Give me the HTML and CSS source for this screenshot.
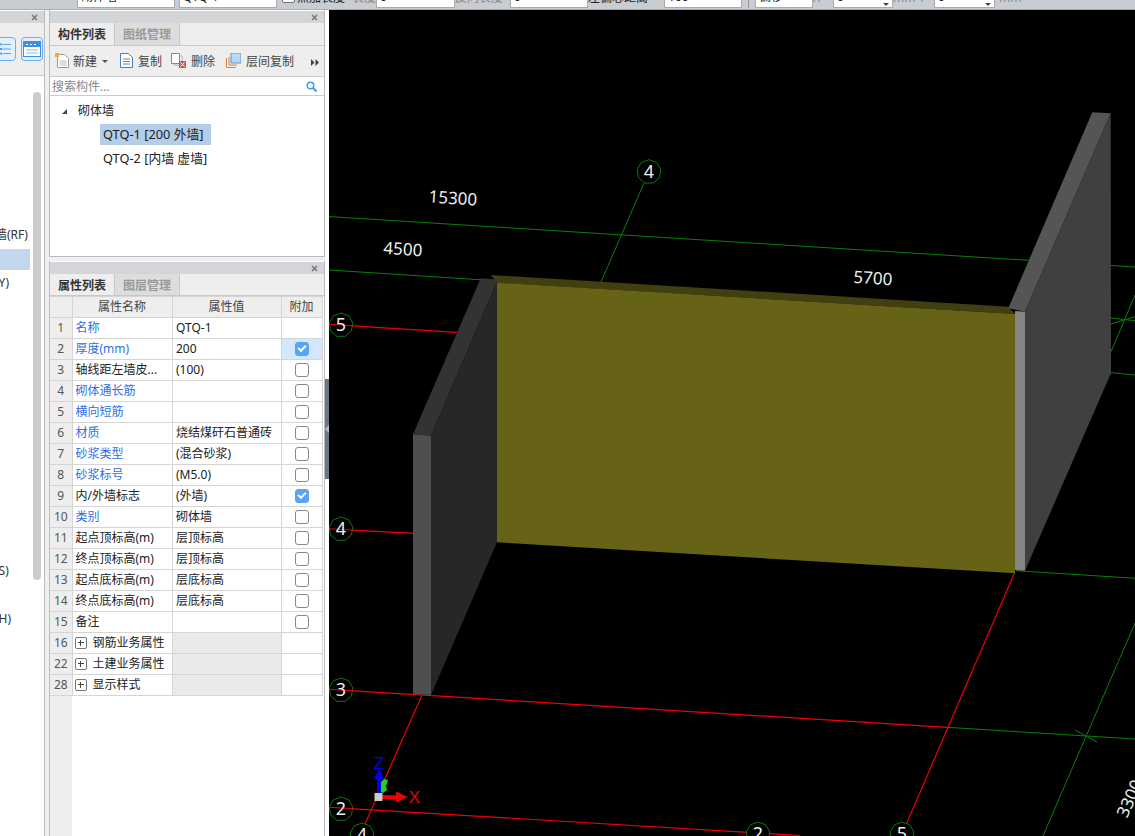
FILE: index.html
```html
<!DOCTYPE html>
<html lang="zh-CN">

<head>
  <meta charset="UTF-8">
  <title>构件列表</title>
  <link rel="stylesheet" href="styles.css">
</head>

<body>
  <div class="topbar">
    <span class="tb-box w-98 ml-77">砌体墙</span>
    <span class="tb-box w-98 ml-4">QTQ-1</span>
    <span class="tb-check"></span>
    <span class="tb-text ml-2">点加长度</span>
    <span class="tb-text grey ml-7">长度</span>
    <span class="tb-box w-79">0</span>
    <span class="tb-text grey w-55">反向长度</span>
    <span class="tb-box w-78">0</span>
    <span class="tb-text w-76">左偏心距离</span>
    <span class="tb-box w-78">100</span>
    <span class="tb-sep"></span>
    <span class="tb-box w-58">偏移</span>
    <span class="tb-text grey w-20">X</span>
    <span class="tb-box w-60 tb-spin">0</span>
    <span class="tb-text grey w-41">mm Y</span>
    <span class="tb-box w-61 tb-spin">0</span>
    <span class="tb-text grey ml-4">mm</span>
  </div>

  <div class="main">
    <div class="side">
      <div class="panel-head"><svg class="close" viewBox="0 0 7 7"><path d="M1 1l5 5M6 1l-5 5"/></svg></div>
      <div class="side-tools">
        <span class="side-btn cut">
          <svg width="22" height="22" viewBox="0 0 22 22"><path d="M5 6h3M5 11h3M5 16h3" fill="none" stroke="#4a98e8" stroke-width="2"/><path d="M9 6h8.500M9 11h8.500M9 16h8.500" fill="none" stroke="#4a98e8"/></svg>
        </span>
        <span class="side-btn">
          <svg width="18" height="16" viewBox="0 0 18 16"><rect x=".5" y=".5" width="17" height="15" fill="#fff" stroke="#3d8fe0"/><rect x="1" y="1" width="16" height="5" fill="#3d8fe0"/><path d="M3 3.500h2M7 3.500h2M11 3.500h2" stroke="#fff"/><path d="M3 9h12M3 12h12" stroke="#8bb9e6"/></svg>
        </span>
      </div>
      <ul class="side-list">
        <li class="first">人防门框墙(RF)</li>
        <li class="on"></li>
        <li>砌体加筋(Y)</li>
        <li class="far">砌体过梁(S)</li>
        <li class="next">栏板压顶(H)</li>
      </ul>
      <div class="side-scroll"></div>
    </div>

    <div class="panels">
      <section class="panel panel-top">
        <div class="panel-head"><svg class="close" viewBox="0 0 7 7"><path d="M1 1l5 5M6 1l-5 5"/></svg></div>
        <div class="tabs">
          <span class="tab on">构件列表</span>
          <span class="tab">图纸管理</span>
        </div>
        <div class="tools">
          <span class="tool tool-new">
            <svg width="14" height="15" viewBox="0 0 14 15"><path d="M2.500 1.500h7l4 4v9h-11z" fill="#fff" stroke="#999"/><path d="M4.500 8h7M4.500 10h7M4.500 12h7" stroke="#bbb"/><rect x="0" y="0" width="4" height="4" fill="#f3a63a"/></svg>
            新建<i class="caret"></i>
          </span>
          <span class="tool tool-copy">
            <svg width="13" height="15" viewBox="0 0 13 15"><path d="M.5 .5h8l4 4v10H.5z" fill="#fff" stroke="#4c7fb5"/><path d="M3 6h7M3 8.500h7M3 11h7" stroke="#4c8fd0"/></svg>
            复制
          </span>
          <span class="tool">
            <svg width="15" height="15" viewBox="0 0 15 15"><path d="M3 3h8v9H3z" fill="#fff" stroke="#aaa"/><path d="M.5 .5h8v10H.500z" fill="#fff" stroke="#888"/><rect x="8" y="8" width="7" height="7" fill="#d9534f"/><path d="M9.500 9.500l4 4M13.500 9.500l-4 4" stroke="#fff"/></svg>
            删除
          </span>
          <span class="tool">
            <svg width="15" height="15" viewBox="0 0 15 15"><path d="M.5 5v9.500H10M3 4v8h8" fill="none" stroke="#e0853d"/><rect x="5" y="0" width="10" height="10" fill="#bcd6f5" stroke="#5b93d6"/></svg>
            层间复制
          </span>
          <svg class="more" width="8" height="7" viewBox="0 0 8 7"><path d="M0 0l3.500 3.500L0 7zM4.500 0L8 3.500 4.500 7z" fill="#444"/></svg>
        </div>
        <div class="search">
          <span>搜索构件...</span>
          <svg width="11" height="11" viewBox="0 0 11 11"><circle cx="4.500" cy="4.500" r="3.300" fill="none" stroke="#4a9bdc" stroke-width="1.500"/><path d="M7 7l3.500 3.500" stroke="#4a9bdc" stroke-width="2"/></svg>
        </div>
        <div class="tree">
          <div class="tree-root"><i class="tree-arrow"></i>砌体墙</div>
          <div class="tree-item on">QTQ-1 [200 外墙]</div>
          <div class="tree-item">QTQ-2 [内墙 虚墙]</div>
        </div>
      </section>

      <section class="panel panel-bottom">
        <div class="panel-head"><svg class="close" viewBox="0 0 7 7"><path d="M1 1l5 5M6 1l-5 5"/></svg></div>
        <div class="tabs">
          <span class="tab on">属性列表</span>
          <span class="tab">图层管理</span>
        </div>
        <div class="props">
          <table>
            <colgroup>
              <col class="c-no"><col class="c-name"><col class="c-val"><col class="c-add">
            </colgroup>
            <thead>
              <tr><th></th><th>属性名称</th><th>属性值</th><th>附加</th></tr>
            </thead>
            <tbody>
              <tr><td class="no">1</td><td class="blue">名称</td><td>QTQ-1</td><td></td></tr>
              <tr><td class="no">2</td><td class="blue">厚度(mm)</td><td>200</td><td class="add hl"><span class="box checked"></span></td></tr>
              <tr><td class="no">3</td><td>轴线距左墙皮...</td><td>(100)</td><td class="add"><span class="box"></span></td></tr>
              <tr><td class="no">4</td><td class="blue">砌体通长筋</td><td></td><td class="add"><span class="box"></span></td></tr>
              <tr><td class="no">5</td><td class="blue">横向短筋</td><td></td><td class="add"><span class="box"></span></td></tr>
              <tr><td class="no">6</td><td class="blue">材质</td><td>烧结煤矸石普通砖</td><td class="add"><span class="box"></span></td></tr>
              <tr><td class="no">7</td><td class="blue">砂浆类型</td><td>(混合砂浆)</td><td class="add"><span class="box"></span></td></tr>
              <tr><td class="no">8</td><td class="blue">砂浆标号</td><td>(M5.0)</td><td class="add"><span class="box"></span></td></tr>
              <tr><td class="no">9</td><td>内/外墙标志</td><td>(外墙)</td><td class="add"><span class="box checked"></span></td></tr>
              <tr><td class="no">10</td><td class="blue">类别</td><td>砌体墙</td><td class="add"><span class="box"></span></td></tr>
              <tr><td class="no">11</td><td>起点顶标高(m)</td><td>层顶标高</td><td class="add"><span class="box"></span></td></tr>
              <tr><td class="no">12</td><td>终点顶标高(m)</td><td>层顶标高</td><td class="add"><span class="box"></span></td></tr>
              <tr><td class="no">13</td><td>起点底标高(m)</td><td>层底标高</td><td class="add"><span class="box"></span></td></tr>
              <tr><td class="no">14</td><td>终点底标高(m)</td><td>层底标高</td><td class="add"><span class="box"></span></td></tr>
              <tr><td class="no">15</td><td>备注</td><td></td><td class="add"><span class="box"></span></td></tr>
              <tr class="group"><td class="no">16</td><td><i class="plus"></i>钢筋业务属性</td><td class="shade"></td><td></td></tr>
              <tr class="group"><td class="no">22</td><td><i class="plus"></i>土建业务属性</td><td class="shade"></td><td></td></tr>
              <tr class="group"><td class="no">28</td><td><i class="plus"></i>显示样式</td><td class="shade"></td><td></td></tr>
            </tbody>
          </table>
        </div>
      </section>
    </div>

    <div class="splitter"><div class="split-handle"><i></i></div></div>

    <div class="view">
      <svg class="scene" viewBox="329 10 806 826" width="806" height="826">
        <defs>
          <polygon id="bubble" points="0,-12 7.700,-9.200 11.800,-2.100 10.400,6 4.100,11.300 -4.100,11.300 -10.400,6 -11.800,-2.100 -7.700,-9.200" fill="#000" stroke="#0a7a0a"/>
        </defs>

        <g fill="none" stroke="#0a7f0a">
          <path d="M329 216.600L1135 267"/>
          <path d="M329 270L500 281"/>
          <path d="M644 183L601 282"/>
          <path d="M1016 570.700L1135 578.300"/>
          <path d="M947 727.300L1135 739"/>
          <path d="M1075 730L1097 742"/>
          <path d="M1043 836L1135 623"/>
          <path d="M1111 318L1135 320.700M1111 324L1135 316.700M1111 351.700L1135 295M1111 372.700L1135 375"/>
        </g>
        <g fill="none" stroke="#f00000" stroke-width="1.200">
          <path d="M329 324.300L460 332.600"/>
          <path d="M329 528.800L414 533.400"/>
          <path d="M329 689.300L947.300 727.300"/>
          <path d="M329 807.300L800 835.500"/>
          <path d="M1015 571.700L906 825"/>
          <path d="M422 695L365 824"/>
        </g>

        <polygon points="413,434.300 431,435.700 498,279.500 480.700,278.300" fill="#333"/>
        <polygon points="431,435.700 497,282 497,542.300 431,695" fill="#272727"/>
        <polygon points="413,434.300 431,435.700 431,695 413,694" fill="#4f4f4f"/>

        <polygon points="491,275 1008.300,306.700 1015,314 496.700,282.700" fill="#413e10"/>
        <polygon points="497,282.700 1015,314 1015,573.300 497,542.300" fill="#676316"/>

        <polygon points="1092.300,112.300 1110.700,113.300 1025,311.700 1008.300,308.300" fill="#555"/>
        <polygon points="1110.700,113.300 1111,373 1025,570.700 1025,311.700" fill="#404040"/>
        <polygon points="1015,311 1025,311.700 1025,570.700 1015,570" fill="#858585"/>

        <use href="#bubble" x="649" y="171.700"/>
        <use href="#bubble" x="341" y="325"/>
        <use href="#bubble" x="341" y="529"/>
        <use href="#bubble" x="341" y="690"/>
        <use href="#bubble" x="341" y="809"/>
        <use href="#bubble" x="362" y="835"/>
        <use href="#bubble" x="758" y="834"/>
        <use href="#bubble" x="902" y="834"/>

        <path d="M329 324.300L353 325.800M329 528.800L353 530.100M329 689.300L353 690.800M329 807.300L353 808.700" stroke="#f00000" fill="none"/>

        <g class="axis-no">
          <text x="649" y="178">4</text>
          <text x="341" y="331">5</text>
          <text x="341" y="535">4</text>
          <text x="341" y="696">3</text>
          <text x="341" y="815">2</text>
          <text x="362" y="841">4</text>
          <text x="758" y="840">2</text>
          <text x="902" y="840">5</text>
        </g>
        <g class="dim">
          <text transform="translate(452.500 204) rotate(4)">15300</text>
          <text transform="translate(402.500 255) rotate(4)">4500</text>
          <text transform="translate(872.500 284) rotate(4)">5700</text>
          <text transform="translate(1135 801) rotate(-66)">3300</text>
        </g>

        <polygon points="384,779 388,780 386,786 387,790 383,793 380,792 380,783" fill="#1fd21f"/>
        <path d="M379 793V778" stroke="#0000f0" stroke-width="4"/>
        <polygon points="379,768.500 384,779 374,779" fill="#0000f0"/>
        <path d="M382 797L397 797.500" stroke="#f00000" stroke-width="4"/>
        <polygon points="408,797 396,791.500 396,802.500" fill="#f00000"/>
        <rect x="374.500" y="793" width="8" height="8" fill="#ccc"/>
        <text class="gizmo" x="379" y="769" fill="#0000f0">Z</text>
        <text class="gizmo" x="414.500" y="803" fill="#f00000">X</text>
      </svg>
    </div>
  </div>
</body>

</html>
```

FILE: styles.css
```css
html,
body {
  height: 100%;
}

body {
  margin: 0;
  height: 836px;
  overflow: hidden;
  background: #f0f0f0;
  color: #222;
  font: 12px/1.2 "Noto Sans", "Noto Sans CJK SC", sans-serif;
}

ul {
  margin: 0;
  padding: 0;
  list-style: none;
}

i {
  font-style: normal;
}

/* top toolbar, only its lower edge is in the picture */
.topbar {
  box-sizing: border-box;
  display: flex;
  align-items: flex-end;
  height: 10px;
  padding-bottom: 1px;
  overflow: hidden;
  background: #c9ccd0;
  border-bottom: 1px solid #a9acb0;
}

.tb-box {
  box-sizing: border-box;
  flex: none;
  height: 22px;
  padding-left: 3px;
  border: 1px solid #aaa;
  background: #fff;
  line-height: 20px;
}

.tb-spin {
  position: relative;
}

.tb-spin::after {
  content: "";
  position: absolute;
  right: 3px;
  bottom: 1px;
  border: 3px solid transparent;
  border-top-color: #444;
  border-bottom: 0;
}

.tb-text {
  flex: none;
  height: 20px;
  line-height: 20px;
  white-space: nowrap;
  overflow: hidden;
}

.tb-text.grey {
  color: #888;
}

.tb-check {
  flex: none;
  box-sizing: border-box;
  width: 13px;
  height: 13px;
  margin: 0 0 5px 5px;
  border: 1px solid #777;
  border-radius: 2px;
  background: #fff;
}

.tb-sep {
  flex: none;
  width: 1px;
  height: 20px;
  margin: 0 6px;
  background: #999;
}

.ml-77 { margin-left: 77px; }
.ml-7 { margin-left: 7px; }
.ml-4 { margin-left: 4px; }
.ml-2 { margin-left: 2px; }
.w-98 { width: 98px; }
.w-79 { width: 79px; }
.w-78 { width: 78px; }
.w-76 { width: 76px; }
.w-61 { width: 61px; }
.w-60 { width: 60px; }
.w-58 { width: 58px; }
.w-55 { width: 55px; }
.w-41 { width: 41px; }
.w-20 { width: 20px; }

.main {
  display: flex;
  height: 826px;
}

/* far left panel */
.side {
  position: relative;
  flex: none;
  box-sizing: border-box;
  width: 45px;
  border-right: 1px solid #bbb;
  background: #fff;
  overflow: hidden;
}

.panel-head {
  display: flex;
  justify-content: flex-end;
  align-items: center;
  height: 12px;
  padding-right: 6px;
  margin-top: 1px;
  background: #d3d5d8;
}

.close {
  width: 7px;
  height: 7px;
  fill: none;
  stroke: #777;
  stroke-width: 1.5;
}

.side-tools {
  display: flex;
  justify-content: flex-end;
  align-items: center;
  gap: 5px;
  height: 52px;
  padding-right: 1px;
  background: #eee;
  border-bottom: 1px solid #ccc;
}

.side-btn {
  display: flex;
  justify-content: center;
  align-items: center;
  flex: none;
  box-sizing: border-box;
  width: 22px;
  height: 24px;
  border: 1px solid #6aaef0;
  border-radius: 4px;
  background: #e3effb;
}

.side-list {
  padding-top: 147px;
  margin-left: -53px;
  color: #333;
  white-space: nowrap;
}

.side-list li {
  box-sizing: border-box;
  width: 83px;
  height: 24px;
  line-height: 24px;
}

.side-list .on {
  padding: 2px 0 1px;
  background: #c5d7ee content-box;
}

.side-list .far {
  margin-top: 264px;
}

.side-list .next {
  margin-top: 24px;
}

.side-scroll {
  position: absolute;
  left: 33px;
  top: 82px;
  width: 8px;
  height: 488px;
  border-radius: 4px;
  background: #ccc;
}

/* middle panels */
.panels {
  flex: none;
  display: flex;
  flex-direction: column;
  gap: 4px;
  width: 276px;
  margin-left: 4px;
}

.panel {
  display: flex;
  flex-direction: column;
  box-sizing: border-box;
  border: 1px solid #bbb;
  border-top: 0;
  background: #fff;
}

.panel-top {
  height: 247px;
}

.panel-bottom {
  flex: 1;
  min-height: 0;
  border-bottom: 0;
}

.tabs {
  display: flex;
  flex: none;
  height: 22px;
  background: #eee;
  border-bottom: 1px solid #c8c8c8;
}

.panel-bottom .tabs {
  height: 21px;
}

.tab {
  box-sizing: border-box;
  width: 65px;
  line-height: 24px;
  text-align: center;
  color: #999;
  background: #ddd;
  border-right: 1px solid #c8c8c8;
  font-weight: 700;
}

.tab.on {
  color: #333;
  background: #eee;
}

.tools {
  display: flex;
  flex: none;
  box-sizing: border-box;
  align-items: center;
  height: 31px;
  padding: 2px 0 0 5px;
  background: #eee;
  border-bottom: 1px solid #ccc;
  color: #444;
}

.tool {
  display: flex;
  align-items: center;
  gap: 5px;
  margin-right: 11px;
  white-space: nowrap;
}

.tool svg {
  margin-top: -2px;
}

.tool-new {
  margin-right: 12px;
}

.tool-new svg {
  margin-right: -1px;
}

.tool-copy {
  margin-right: 9px;
}

.caret {
  width: 0;
  height: 0;
  border: 3px solid transparent;
  border-top-color: #555;
  border-bottom: 0;
}

.more {
  margin-left: auto;
  margin-right: 5px;
}

.search {
  display: flex;
  flex: none;
  box-sizing: border-box;
  justify-content: space-between;
  align-items: center;
  height: 19px;
  padding: 2px 7px 0 2px;
  color: #888;
  border-bottom: 1px solid #ccc;
}

.search svg {
  margin-top: -2px;
}

.tree {
  flex: 1;
  padding-top: 3px;
  color: #222;
}

.tree-root {
  display: flex;
  align-items: center;
  height: 24px;
  margin-bottom: 1px;
  padding-left: 12px;
}

.tree-arrow {
  width: 0;
  height: 0;
  margin-right: 11px;
  border-style: solid;
  border-width: 0 0 5px 5px;
  border-color: transparent transparent #444 transparent;
}

.tree-item {
  width: max-content;
  height: 21px;
  margin: 0 0 3px 50px;
  padding: 0 7px 0 3px;
  font-size: 12.800px;
  line-height: 21px;
}

.tree-item.on {
  background: #b4cde9;
}

/* property table */
.props {
  flex: 1;
  min-height: 0;
  background: linear-gradient(to right, #eee 22px, #fff 22px);
}

table {
  table-layout: fixed;
  width: 272px;
  border-collapse: collapse;
}

.c-no { width: 22px; }
.c-name { width: 100px; }
.c-val { width: 109px; }
.c-add { width: 41px; }

th,
td {
  box-sizing: border-box;
  height: 21px;
  padding: 0 3px;
  border: 1px solid #d5d5d5;
  white-space: nowrap;
  overflow: hidden;
  font-weight: 400;
}

.group td:nth-child(2) {
  padding-left: 2px;
}

td:nth-child(3) {
  padding-left: 3.500px;
}

th {
  text-align: center;
  background: #eee;
  color: #444;
}

th:first-child,
td:first-child {
  border-left: 0;
}

.no {
  padding: 0;
  text-align: center;
  background: #eee;
  color: #555;
}

.blue {
  color: #2f6fe6;
}

.add {
  padding: 0;
  text-align: center;
}

.add.hl {
  background: #d4e8fb;
}

.box {
  display: block;
  box-sizing: border-box;
  width: 14px;
  height: 14px;
  margin: 0 auto;
  border: 1px solid #888;
  border-radius: 3px;
  background: #fff;
}

.box.checked {
  position: relative;
  border-color: #5aa3f5;
  background: #5aa3f5;
}

.box.checked::after {
  content: "";
  position: absolute;
  left: 2px;
  top: 2px;
  width: 6px;
  height: 3px;
  border-left: 2px solid #fff;
  border-bottom: 2px solid #fff;
  transform: rotate(-45deg);
}

.shade {
  background: #eaeaea;
}

.plus {
  display: inline-block;
  box-sizing: border-box;
  width: 12px;
  height: 12px;
  margin-right: 6px;
  border: 1px solid #777;
  border-radius: 2px;
  vertical-align: -2px;
  background: linear-gradient(#444, #444) center / 6px 1px no-repeat, linear-gradient(#444, #444) center / 1px 6px no-repeat;
}

/* splitter and the 3d view */
.splitter {
  flex: none;
  width: 4px;
  background: #fff;
}

.split-handle {
  display: flex;
  align-items: center;
  height: 100px;
  margin-top: 369px;
  background: #6b7680;
}

.split-handle i {
  width: 0;
  height: 0;
  border: 4px solid transparent;
  border-right-color: #bbb;
  border-left: 0;
}

.view {
  flex: 1;
  position: relative;
  background: #000;
  overflow: hidden;
}

.scene {
  display: block;
}

.scene text {
  font-family: "Noto Sans", sans-serif;
  text-anchor: middle;
}

.axis-no text {
  font-size: 18px;
  fill: #eee;
}

.dim text {
  font-size: 17px;
  fill: #eee;
}

.scene .gizmo {
  font-family: "Liberation Sans", sans-serif;
  font-size: 17px;
}
```
